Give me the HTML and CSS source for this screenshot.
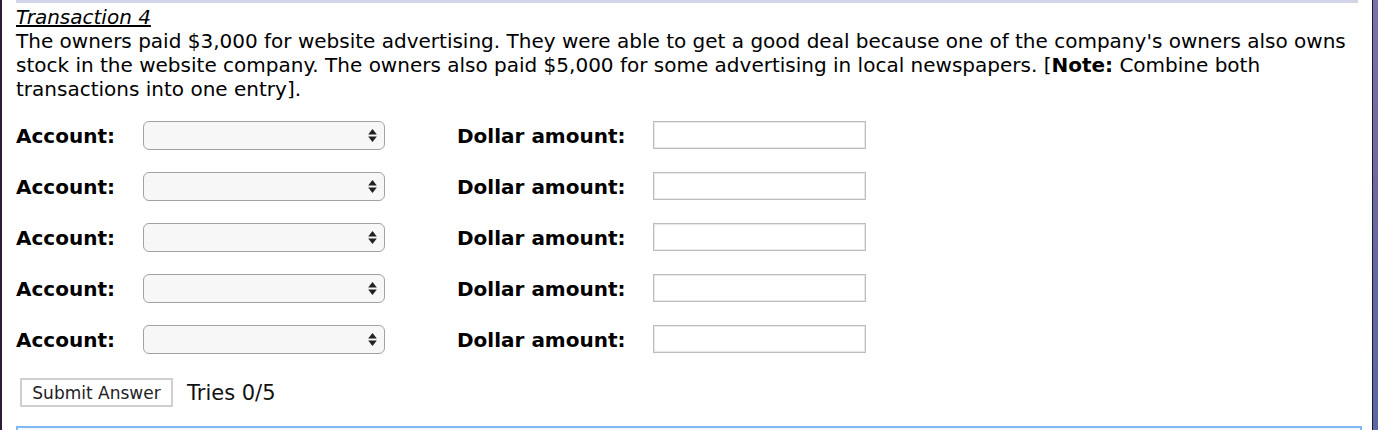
FILE: index.html
```html
<!DOCTYPE html>
<html>
<head>
<meta charset="utf-8">
<link rel="stylesheet" href="styles.css">
</head>
<body>
<div class="edge-left"></div>
<main class="main">
  <div class="top-bar"></div>
  <div class="question">
    <div class="title">Transaction 4</div>
    <div class="text">The owners paid $3,000 for website advertising. They were able to get a good deal because one of the company's owners also owns stock in the website company. The owners also paid $5,000 for some advertising in local newspapers. [<b>Note:</b> Combine both transactions into one entry].</div>
  </div>
  <form class="entries">
    <div class="row">
      <label class="lbl lbl-acct">Account:</label>
      <span class="sel-wrap"><select class="sel"><option></option></select><svg class="arrows" width="8" height="12" viewBox="0 0 8 12"><path d="M4 0 L8 5 L0 5 Z M0 7 L8 7 L4 12 Z" fill="#222"/></svg></span>
      <label class="lbl lbl-amt">Dollar amount:</label>
      <input class="amt" type="text">
    </div>
    <div class="row">
      <label class="lbl lbl-acct">Account:</label>
      <span class="sel-wrap"><select class="sel"><option></option></select><svg class="arrows" width="8" height="12" viewBox="0 0 8 12"><path d="M4 0 L8 5 L0 5 Z M0 7 L8 7 L4 12 Z" fill="#222"/></svg></span>
      <label class="lbl lbl-amt">Dollar amount:</label>
      <input class="amt" type="text">
    </div>
    <div class="row">
      <label class="lbl lbl-acct">Account:</label>
      <span class="sel-wrap"><select class="sel"><option></option></select><svg class="arrows" width="8" height="12" viewBox="0 0 8 12"><path d="M4 0 L8 5 L0 5 Z M0 7 L8 7 L4 12 Z" fill="#222"/></svg></span>
      <label class="lbl lbl-amt">Dollar amount:</label>
      <input class="amt" type="text">
    </div>
    <div class="row">
      <label class="lbl lbl-acct">Account:</label>
      <span class="sel-wrap"><select class="sel"><option></option></select><svg class="arrows" width="8" height="12" viewBox="0 0 8 12"><path d="M4 0 L8 5 L0 5 Z M0 7 L8 7 L4 12 Z" fill="#222"/></svg></span>
      <label class="lbl lbl-amt">Dollar amount:</label>
      <input class="amt" type="text">
    </div>
    <div class="row">
      <label class="lbl lbl-acct">Account:</label>
      <span class="sel-wrap"><select class="sel"><option></option></select><svg class="arrows" width="8" height="12" viewBox="0 0 8 12"><path d="M4 0 L8 5 L0 5 Z M0 7 L8 7 L4 12 Z" fill="#222"/></svg></span>
      <label class="lbl lbl-amt">Dollar amount:</label>
      <input class="amt" type="text">
    </div>
    <div class="submit-row">
      <button type="button" class="submit">Submit Answer</button>
      <span class="tries">Tries 0/5</span>
    </div>
  </form>
  <div class="next-box"></div>
</main>
<div class="edge-right"><div class="edge-line"></div><div class="desktop"></div></div>
</body>
</html>
```

FILE: styles.css
```css
html, body {
  margin: 0;
  padding: 0;
  height: 100%;
  overflow: hidden;
}
body {
  display: flex;
  background: #ffffff;
  font-family: "DejaVu Sans", Verdana, sans-serif;
  color: #000;
}
.edge-left {
  width: 2px;
  flex: none;
  background: #2e1c36;
}
.main {
  flex: 1;
  padding: 0 10px 0 14px;
  display: flex;
  flex-direction: column;
  min-width: 0;
}
.top-bar {
  height: 3px;
  background: #d4d4e8;
  margin-right: 4px;
  flex: none;
}
.question {
  font-size: 20px;
  line-height: 24px;
  margin-top: 2px;
}
.title {
  font-style: italic;
  text-decoration: underline;
}
.entries {
  margin: 9px 0 0 0;
}
.row {
  height: 51px;
  display: flex;
  align-items: center;
}
.lbl {
  font-weight: bold;
  font-size: 20px;
}
.lbl-acct {
  width: 127px;
}
.sel-wrap {
  position: relative;
  display: inline-block;
  width: 242px;
  height: 29px;
}
.sel {
  -webkit-appearance: none;
  appearance: none;
  width: 242px;
  height: 29px;
  margin: 0;
  border: 1.5px solid #a2a2a2;
  border-radius: 6px;
  background: #f7f7f7;
  box-sizing: border-box;
}
.arrows {
  position: absolute;
  right: 8px;
  top: 8px;
  width: 9px;
  height: 13px;
  pointer-events: none;
}
.lbl-amt {
  margin-left: 72px;
  width: 196px;
}
.amt {
  width: 213px;
  height: 28px;
  margin: 0 0 2px 0;
  box-sizing: border-box;
  border: 1px solid #bdbdbd;
  box-shadow: inset 0 0 0 1px #e8e8e8;
  background: #fff;
  padding: 0;
}
.submit-row {
  margin-top: 13px;
  display: flex;
  align-items: center;
  padding-left: 4px;
}
.submit {
  height: 29px;
  width: 153px;
  box-sizing: border-box;
  border: 2px solid #cfcfcf;
  background: #fff;
  font-family: "DejaVu Sans", Verdana, sans-serif;
  font-size: 17px;
  color: #222;
  padding: 0;
  margin: 0;
}
.tries {
  margin-left: 14px;
  font-size: 21px;
  color: #111;
}
.next-box {
  margin-top: 19px;
  height: 20px;
  border: 2px solid #82b8f2;
  border-bottom: none;
  background: #f4f8fe;
}
.edge-right {
  display: flex;
  flex: none;
}
.edge-line {
  width: 1px;
  background: #1c1a26;
}
.desktop {
  width: 5px;
  background: linear-gradient(180deg, #7a72a8 0%, #6c68a0 50%, #5a68a8 100%);
}
```
